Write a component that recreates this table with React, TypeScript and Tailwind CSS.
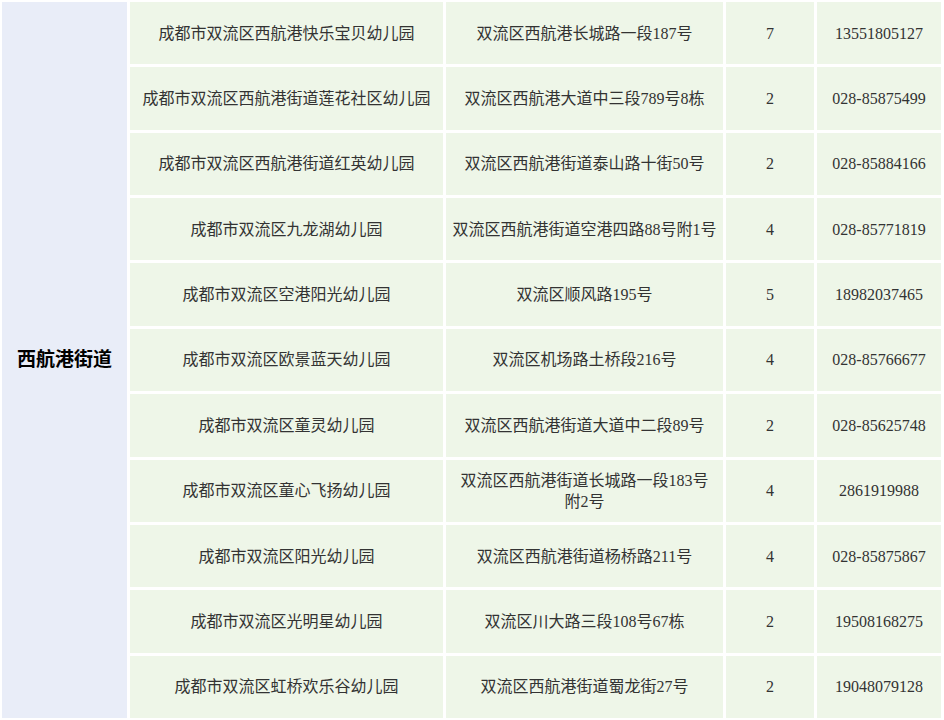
const rows: [string, React.ReactNode, string, string][] = [
  ["成都市双流区西航港快乐宝贝幼儿园", "双流区西航港长城路一段187号", "7", "13551805127"],
  ["成都市双流区西航港街道莲花社区幼儿园", "双流区西航港大道中三段789号8栋", "2", "028-85875499"],
  ["成都市双流区西航港街道红英幼儿园", "双流区西航港街道泰山路十街50号", "2", "028-85884166"],
  ["成都市双流区九龙湖幼儿园", "双流区西航港街道空港四路88号附1号", "4", "028-85771819"],
  ["成都市双流区空港阳光幼儿园", "双流区顺风路195号", "5", "18982037465"],
  ["成都市双流区欧景蓝天幼儿园", "双流区机场路土桥段216号", "4", "028-85766677"],
  ["成都市双流区童灵幼儿园", "双流区西航港街道大道中二段89号", "2", "028-85625748"],
  [
    "成都市双流区童心飞扬幼儿园",
    <>
      双流区西航港街道长城路一段183号
      <br />
      附2号
    </>,
    "4",
    "2861919988",
  ],
  ["成都市双流区阳光幼儿园", "双流区西航港街道杨桥路211号", "4", "028-85875867"],
  ["成都市双流区光明星幼儿园", "双流区川大路三段108号67栋", "2", "19508168275"],
  ["成都市双流区虹桥欢乐谷幼儿园", "双流区西航港街道蜀龙街27号", "2", "19048079128"],
];

const cell =
  "flex items-center justify-center text-center bg-[#eef6e8] px-[5px] text-[16px] leading-[21px] text-[#333333]";

export default function App() {
  return (
    <div
      className="h-[720px] w-[944px] bg-white p-[2px] pr-[3px] grid grid-cols-[125px_313px_277px_88px_124px] grid-rows-[repeat(11,minmax(0,1fr))] gap-[3px] overflow-hidden"
      style={{ fontFamily: '"Liberation Serif", "Noto Sans CJK SC", serif' }}
    >
      <div className="row-span-11 flex items-center justify-center bg-[#e9edf8] text-[19px] font-bold text-black">
        西航港街道
      </div>
      {rows.map((r, i) => (
        <div key={i} className="contents">
          <div className={cell}>{r[0]}</div>
          <div className={cell}>{r[1]}</div>
          <div className={cell}>{r[2]}</div>
          <div className={cell}>{r[3]}</div>
        </div>
      ))}
    </div>
  );
}
